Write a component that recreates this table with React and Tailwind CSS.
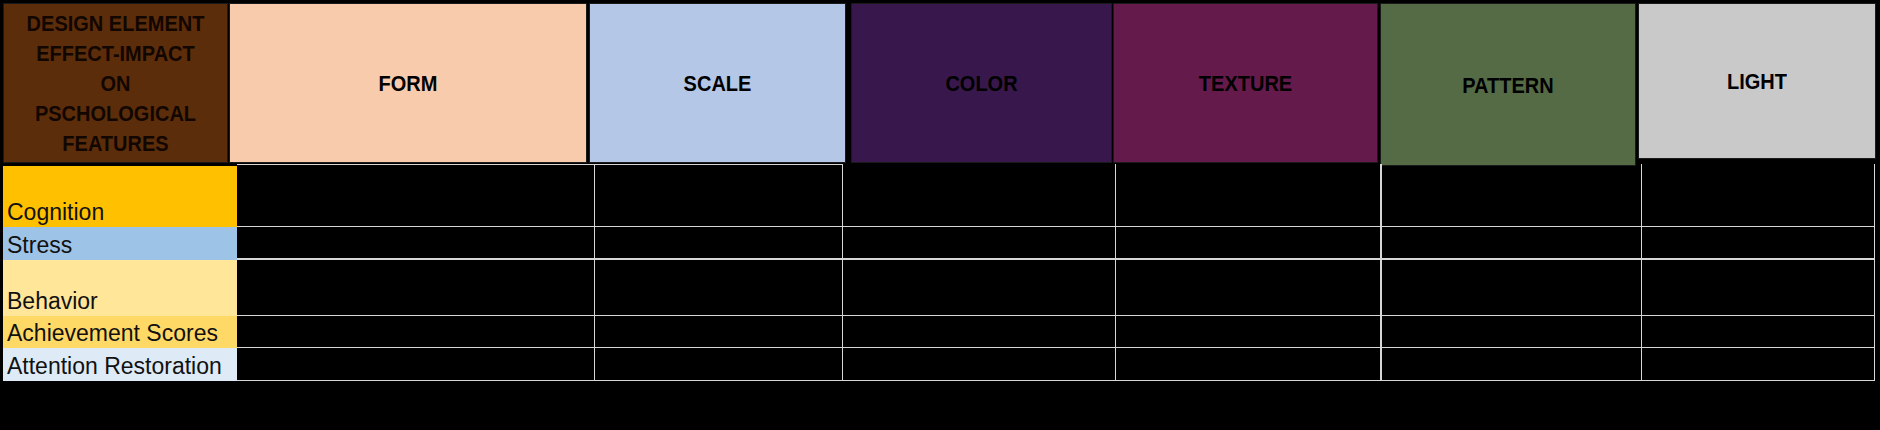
import React from "react";

const font = { fontFamily: '"Liberation Sans", Arial, sans-serif' };

const labels = [
  { text: "Cognition", cls: "h-[61px] bg-[#FFC000]" },
  { text: "Stress", cls: "h-[33px] bg-[#9DC3E6]" },
  { text: "Behavior", cls: "h-[56px] bg-[#FFE699]" },
  { text: "Achievement Scores", cls: "h-[32px] bg-[#FFD966]" },
  { text: "Attention Restoration", cls: "h-[33px] bg-[#DEEBF7]" },
];

const rowCls = [
  "h-[63px] border-b",
  "h-[33px] border-b-2",
  "h-[56px] border-b",
  "h-[32px] border-b",
  "h-[33px] border-b",
];

const colCls = [
  "border-r",
  "border-r",
  "border-r",
  "border-r-2",
  "border-r",
  "border-r",
];

function HeadCell({ cls, children }) {
  return (
    <div
      className={`flex shrink-0 items-center justify-center border border-[#1a1a1a] text-[20px] font-bold text-black ${cls}`}
    >
      <span className="inline-block scale-y-[1.12]">{children}</span>
    </div>
  );
}

export default function App() {
  return (
    <div
      className="w-[1880px] h-[430px] bg-black pt-[3px] pl-[3px] overflow-hidden"
      style={font}
    >
      {/* header */}
      <div className="flex h-[161px] items-start">
        <div className="flex h-[160px] w-[225px] shrink-0 flex-col items-center justify-center border border-[#1a1a1a] bg-[#5c2d0a] text-center text-[20px] font-bold leading-[30px] text-[#120600]">
          <span className="scale-y-[1.12]">DESIGN ELEMENT</span>
          <span className="scale-y-[1.12]">EFFECT-IMPACT</span>
          <span className="scale-y-[1.12]">ON</span>
          <span className="scale-y-[1.12]">PSCHOLOGICAL</span>
          <span className="scale-y-[1.12]">FEATURES</span>
        </div>
        <HeadCell cls="ml-[1px] h-[160px] w-[358px] bg-[#F8CBAD]">FORM</HeadCell>
        <HeadCell cls="ml-[2px] h-[160px] w-[257px] bg-[#B4C7E7]">SCALE</HeadCell>
        <HeadCell cls="ml-[5px] h-[160px] w-[261px] bg-[#38184c] text-[#16081f]">COLOR</HeadCell>
        <HeadCell cls="ml-[1px] h-[160px] w-[265px] bg-[#641a4b]">TEXTURE</HeadCell>
        <HeadCell cls="ml-[2px] h-[163px] w-[256px] bg-[#556b45]">PATTERN</HeadCell>
        <HeadCell cls="ml-[2px] h-[156px] w-[238px] bg-[#C9C9C9]">LIGHT</HeadCell>
      </div>

      {/* body */}
      <div className="flex">
        <div className="flex w-[234px] shrink-0 flex-col pt-[2px]">
          {labels.map((l) => (
            <div
              key={l.text}
              className={`flex items-end pl-[4px] pb-[2px] text-[23px] leading-[26px] text-[#111] ${l.cls}`}
            >
              {l.text}
            </div>
          ))}
        </div>
        <div className="grid grid-cols-[358px_248px_273px_266px_260px_233px]">
          {rowCls.map((r, ri) =>
            colCls.map((c, ci) => (
              <div
                key={`${ri}-${ci}`}
                className={`border-[#d6d6d6] ${r} ${c} ${
                  ri === 0 && ci < 2 ? "border-t" : ""
                }`}
              />
            ))
          )}
        </div>
      </div>
    </div>
  );
}
